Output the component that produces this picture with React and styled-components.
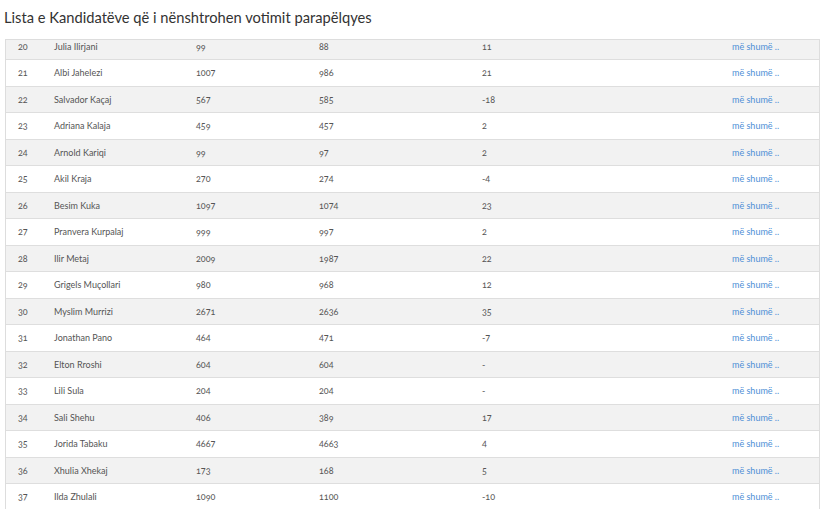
import React from "react";
import styled, { createGlobalStyle } from "styled-components";

const Global = createGlobalStyle`
  html, body { margin: 0; padding: 0; background: #fff; }
  body { font-family: Lato, "Noto Sans", sans-serif; overflow: hidden; }
`;

const Page = styled.div`
  width: 821px;
  height: 509px;
  display: flex;
  flex-direction: column;
  overflow: hidden;
`;

const Title = styled.h3`
  margin: 0;
  padding: 8px 0 0 4px;
  height: 39px;
  flex: none;
  box-sizing: border-box;
  font-family: Lato, "Noto Sans", sans-serif;
  font-weight: 400;
  font-size: 14.7px;
  color: #333;
`;

const Panel = styled.div`
  margin-left: 5px;
  width: 813px;
  flex: 1;
  overflow: hidden;
  border-left: 1px solid #ddd;
  border-right: 1px solid #ddd;
  border-top: 1px solid #ddd;
`;

const Table = styled.table`
  width: 100%;
  border-collapse: collapse;
  margin-top: -7px;
  font-size: 9px;
  color: #555;
  font-variant-numeric: oldstyle-nums;
`;

const Row = styled.tr`
  height: 26.5px;
  background: ${(p) => (p.$alt ? "#f2f2f2" : "#fff")};
  border-bottom: 1px solid #dedede;
`;

const Cell = styled.td`
  padding: 0 0 0 ${(p) => p.$pl || 0}px;
  width: ${(p) => p.$w}px;
  vertical-align: middle;
  white-space: nowrap;
`;

const More = styled.a`
  color: #4d8fd6;
  text-decoration: none;
  font-size: 9px;
`;

const rows = [
  [20, "Julia Ilirjani", 99, 88, "11"],
  [21, "Albi Jahelezi", 1007, 986, "21"],
  [22, "Salvador Kaçaj", 567, 585, "-18"],
  [23, "Adriana Kalaja", 459, 457, "2"],
  [24, "Arnold Kariqi", 99, 97, "2"],
  [25, "Akil Kraja", 270, 274, "-4"],
  [26, "Besim Kuka", 1097, 1074, "23"],
  [27, "Pranvera Kurpalaj", 999, 997, "2"],
  [28, "Ilir Metaj", 2009, 1987, "22"],
  [29, "Grigels Muçollari", 980, 968, "12"],
  [30, "Myslim Murrizi", 2671, 2636, "35"],
  [31, "Jonathan Pano", 464, 471, "-7"],
  [32, "Elton Rroshi", 604, 604, "-"],
  [33, "Lili Sula", 204, 204, "-"],
  [34, "Sali Shehu", 406, 389, "17"],
  [35, "Jorida Tabaku", 4667, 4663, "4"],
  [36, "Xhulia Xhekaj", 173, 168, "5"],
  [37, "Ilda Zhulali", 1090, 1100, "-10"],
];

export default function App() {
  return (
    <Page>
      <Global />
      <Title>Lista e Kandidatëve që i nënshtrohen votimit parapëlqyes</Title>
      <Panel>
        <Table>
          <tbody>
            {rows.map((r, i) => (
              <Row key={r[0]} $alt={i % 2 === 0}>
                <Cell $pl={12} $w={36}>{r[0]}</Cell>
                <Cell $w={142}>{r[1]}</Cell>
                <Cell $w={123}>{r[2]}</Cell>
                <Cell $w={163}>{r[3]}</Cell>
                <Cell $w={250}>{r[4]}</Cell>
                <Cell>
                  <More href="#">më shumë ..</More>
                </Cell>
              </Row>
            ))}
          </tbody>
        </Table>
      </Panel>
    </Page>
  );
}
